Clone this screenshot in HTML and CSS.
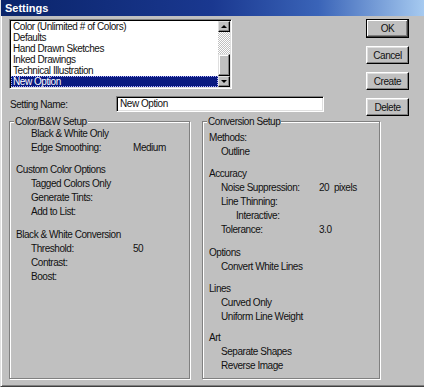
FILE: index.html
```
<!DOCTYPE html>
<html>
<head>
<meta charset="utf-8">
<link rel="stylesheet" href="styles.css">
</head>
<body>
<div class="window">
  <div class="titlebar"><span class="title">Settings</span></div>
  <div class="content">
    <div class="top">
      <div class="left-col">
        <div class="listbox">
          <div class="items">
            <div class="item">Color (Unlimited # of Colors)</div>
            <div class="item">Defaults</div>
            <div class="item">Hand Drawn Sketches</div>
            <div class="item">Inked Drawings</div>
            <div class="item">Technical Illustration</div>
            <div class="item selected"><span class="focus">New Option</span></div>
          </div>
          <div class="scrollbar">
            <div class="sb-btn"><span class="arrow-up"></span></div>
            <div class="sb-track"></div>
            <div class="sb-thumb"></div>
            <div class="sb-btn"><span class="arrow-down"></span></div>
          </div>
        </div>
        <div class="name-row">
          <span class="name-label">Setting Name:</span>
          <div class="textbox">New Option</div>
        </div>
      </div>
      <div class="buttons">
        <div class="btn default">OK</div>
        <div class="btn">Cancel</div>
        <div class="btn">Create</div>
        <div class="btn">Delete</div>
      </div>
    </div>
    <div class="groups">
      <fieldset class="group group-left">
        <legend>Color/B&amp;W Setup</legend>
        <div class="line item-l">Black &amp; White Only</div>
        <div class="line item-l pair"><span class="lbl-l">Edge Smoothing:</span><span>Medium</span></div>
        <div class="line head sec">Custom Color Options</div>
        <div class="line item-l">Tagged Colors Only</div>
        <div class="line item-l">Generate Tints:</div>
        <div class="line item-l">Add to List:</div>
        <div class="line head sec2">Black &amp; White Conversion</div>
        <div class="line item-l pair"><span class="lbl-l">Threshold:</span><span>50</span></div>
        <div class="line item-l">Contrast:</div>
        <div class="line item-l">Boost:</div>
      </fieldset>
      <fieldset class="group group-right">
        <legend>Conversion Setup</legend>
        <div class="line head first">Methods:</div>
        <div class="line item-r">Outline</div>
        <div class="line head sec">Accuracy</div>
        <div class="line item-r pair"><span class="lbl-r">Noise Suppression:</span><span>20&nbsp; pixels</span></div>
        <div class="line item-r">Line Thinning:</div>
        <div class="line item-rr">Interactive:</div>
        <div class="line item-r pair"><span class="lbl-r">Tolerance:</span><span>3.0</span></div>
        <div class="line head sec2">Options</div>
        <div class="line item-r">Convert White Lines</div>
        <div class="line head sec">Lines</div>
        <div class="line item-r">Curved Only</div>
        <div class="line item-r">Uniform Line Weight</div>
        <div class="line head sec3">Art</div>
        <div class="line item-r">Separate Shapes</div>
        <div class="line item-r">Reverse Image</div>
      </fieldset>
    </div>
  </div>
</div>
</body>
</html>
```
FILE: styles.css
```
html, body {
  margin: 0;
  padding: 0;
  background: #c0c0c0;
}
body {
  font-family: "Liberation Sans", Arial, sans-serif;
  font-size: 10px;
  letter-spacing: -0.45px;
  color: #111;
}
.window {
  box-sizing: border-box;
  width: 424px;
  height: 387px;
  background: #c0c0c0;
  border-left: 1px solid #dfdfdf;
  border-bottom: 1px solid #404040;
  box-shadow: inset 1px 0 0 #fff, inset 0 -1px 0 #808080;
  display: flex;
  flex-direction: column;
}
.titlebar {
  height: 16px;
  flex: none;
  background: linear-gradient(90deg, #0a246a 0%, #1a3890 50%, #3a64b8 75%, #a6caf0 100%);
  display: flex;
  align-items: center;
  padding-left: 4px;
}
.title {
  color: #fff;
  font-weight: bold;
  font-size: 11px;
  letter-spacing: 0;
}
.content {
  padding: 3px 0 0 8px;
  display: flex;
  flex-direction: column;
}
.top {
  display: flex;
  height: 97px;
}
.left-col {
  width: 315px;
  display: flex;
  flex-direction: column;
}
.listbox {
  box-sizing: border-box;
  width: 223px;
  height: 70px;
  background: #fff;
  border: 1px solid;
  border-color: #808080 #fff #fff #808080;
  box-shadow: inset 1px 1px 0 #000, inset -1px -1px 0 #dfdfdf;
  padding: 1px;
  display: flex;
}
.items {
  flex: 1;
}
.item {
  height: 11px;
  line-height: 11px;
  padding-left: 2px;
  white-space: nowrap;
}
.item.selected {
  background: #0a1a80;
  color: #fff;
  outline: 1px dotted #b0b0ff;
  outline-offset: -1px;
}
.scrollbar {
  width: 12px;
  display: flex;
  flex-direction: column;
}
.sb-btn {
  box-sizing: border-box;
  height: 11px;
  background: #c0c0c0;
  border: 1px solid;
  border-color: #dfdfdf #000 #000 #dfdfdf;
  box-shadow: inset -1px -1px 0 #808080;
  display: flex;
  align-items: center;
  justify-content: center;
}
.arrow-up {
  width: 0;
  height: 0;
  border-left: 3px solid transparent;
  border-right: 3px solid transparent;
  border-bottom: 3px solid #000;
}
.arrow-down {
  width: 0;
  height: 0;
  border-left: 3px solid transparent;
  border-right: 3px solid transparent;
  border-top: 3px solid #000;
}
.sb-track {
  flex: 1;
  background: repeating-conic-gradient(#c0c0c0 0 25%, #fff 0 50%) 0 0 / 2px 2px;
}
.sb-thumb {
  box-sizing: border-box;
  height: 22px;
  background: #c0c0c0;
  border: 1px solid;
  border-color: #dfdfdf #000 #000 #dfdfdf;
  box-shadow: inset -1px -1px 0 #808080, inset 1px 1px 0 #fff;
}
.name-row {
  margin-top: 7px;
  display: flex;
  align-items: center;
}
.name-label {
  width: 106px;
  padding-left: 1px;
}
.textbox {
  box-sizing: border-box;
  width: 208px;
  height: 16px;
  background: #fff;
  border: 1px solid;
  border-color: #808080 #fff #fff #808080;
  box-shadow: inset 1px 1px 0 #000, inset -1px -1px 0 #dfdfdf;
  padding-left: 3px;
  line-height: 14px;
}
.buttons {
  margin-left: 42px;
  display: flex;
  flex-direction: column;
  gap: 8px;
}
.btn {
  box-sizing: border-box;
  width: 43px;
  height: 18px;
  border: 1px solid;
  border-color: #fff #000 #000 #fff;
  box-shadow: inset -1px -1px 0 #808080, inset 1px 1px 0 #dfdfdf;
  display: flex;
  align-items: center;
  justify-content: center;
}
.btn.default {
  height: 19px;
  border-color: #000;
  box-shadow: inset -1px -1px 0 #404040, inset 1px 1px 0 #fff, inset -2px -2px 0 #808080;
}
.groups {
  display: flex;
  gap: 12px;
}
.group {
  box-sizing: border-box;
  margin: 0;
  height: 263px;
  border: 1px solid #808080;
  box-shadow: inset 1px 1px 0 #fff, 1px 1px 0 #fff;
  padding: 0 0 0 6px;
}
.group-left {
  width: 181px;
}
.group-right {
  width: 178px;
}
legend {
  padding: 0 1px;
  margin-left: -2px;
  line-height: 11px;
  background: #c0c0c0;
}
.line {
  height: 14px;
  line-height: 14px;
  white-space: nowrap;
}
.item-l {
  padding-left: 15px;
}
.item-r {
  padding-left: 12px;
}
.item-rr {
  padding-left: 27px;
}
.pair {
  display: flex;
}
.lbl-l {
  width: 102px;
}
.lbl-r {
  width: 98px;
}
.head.first {
  margin-top: 4px;
}
.head.sec {
  margin-top: 8px;
}
.head.sec2 {
  margin-top: 9px;
}
.head.sec3 {
  margin-top: 7px;
}
```
